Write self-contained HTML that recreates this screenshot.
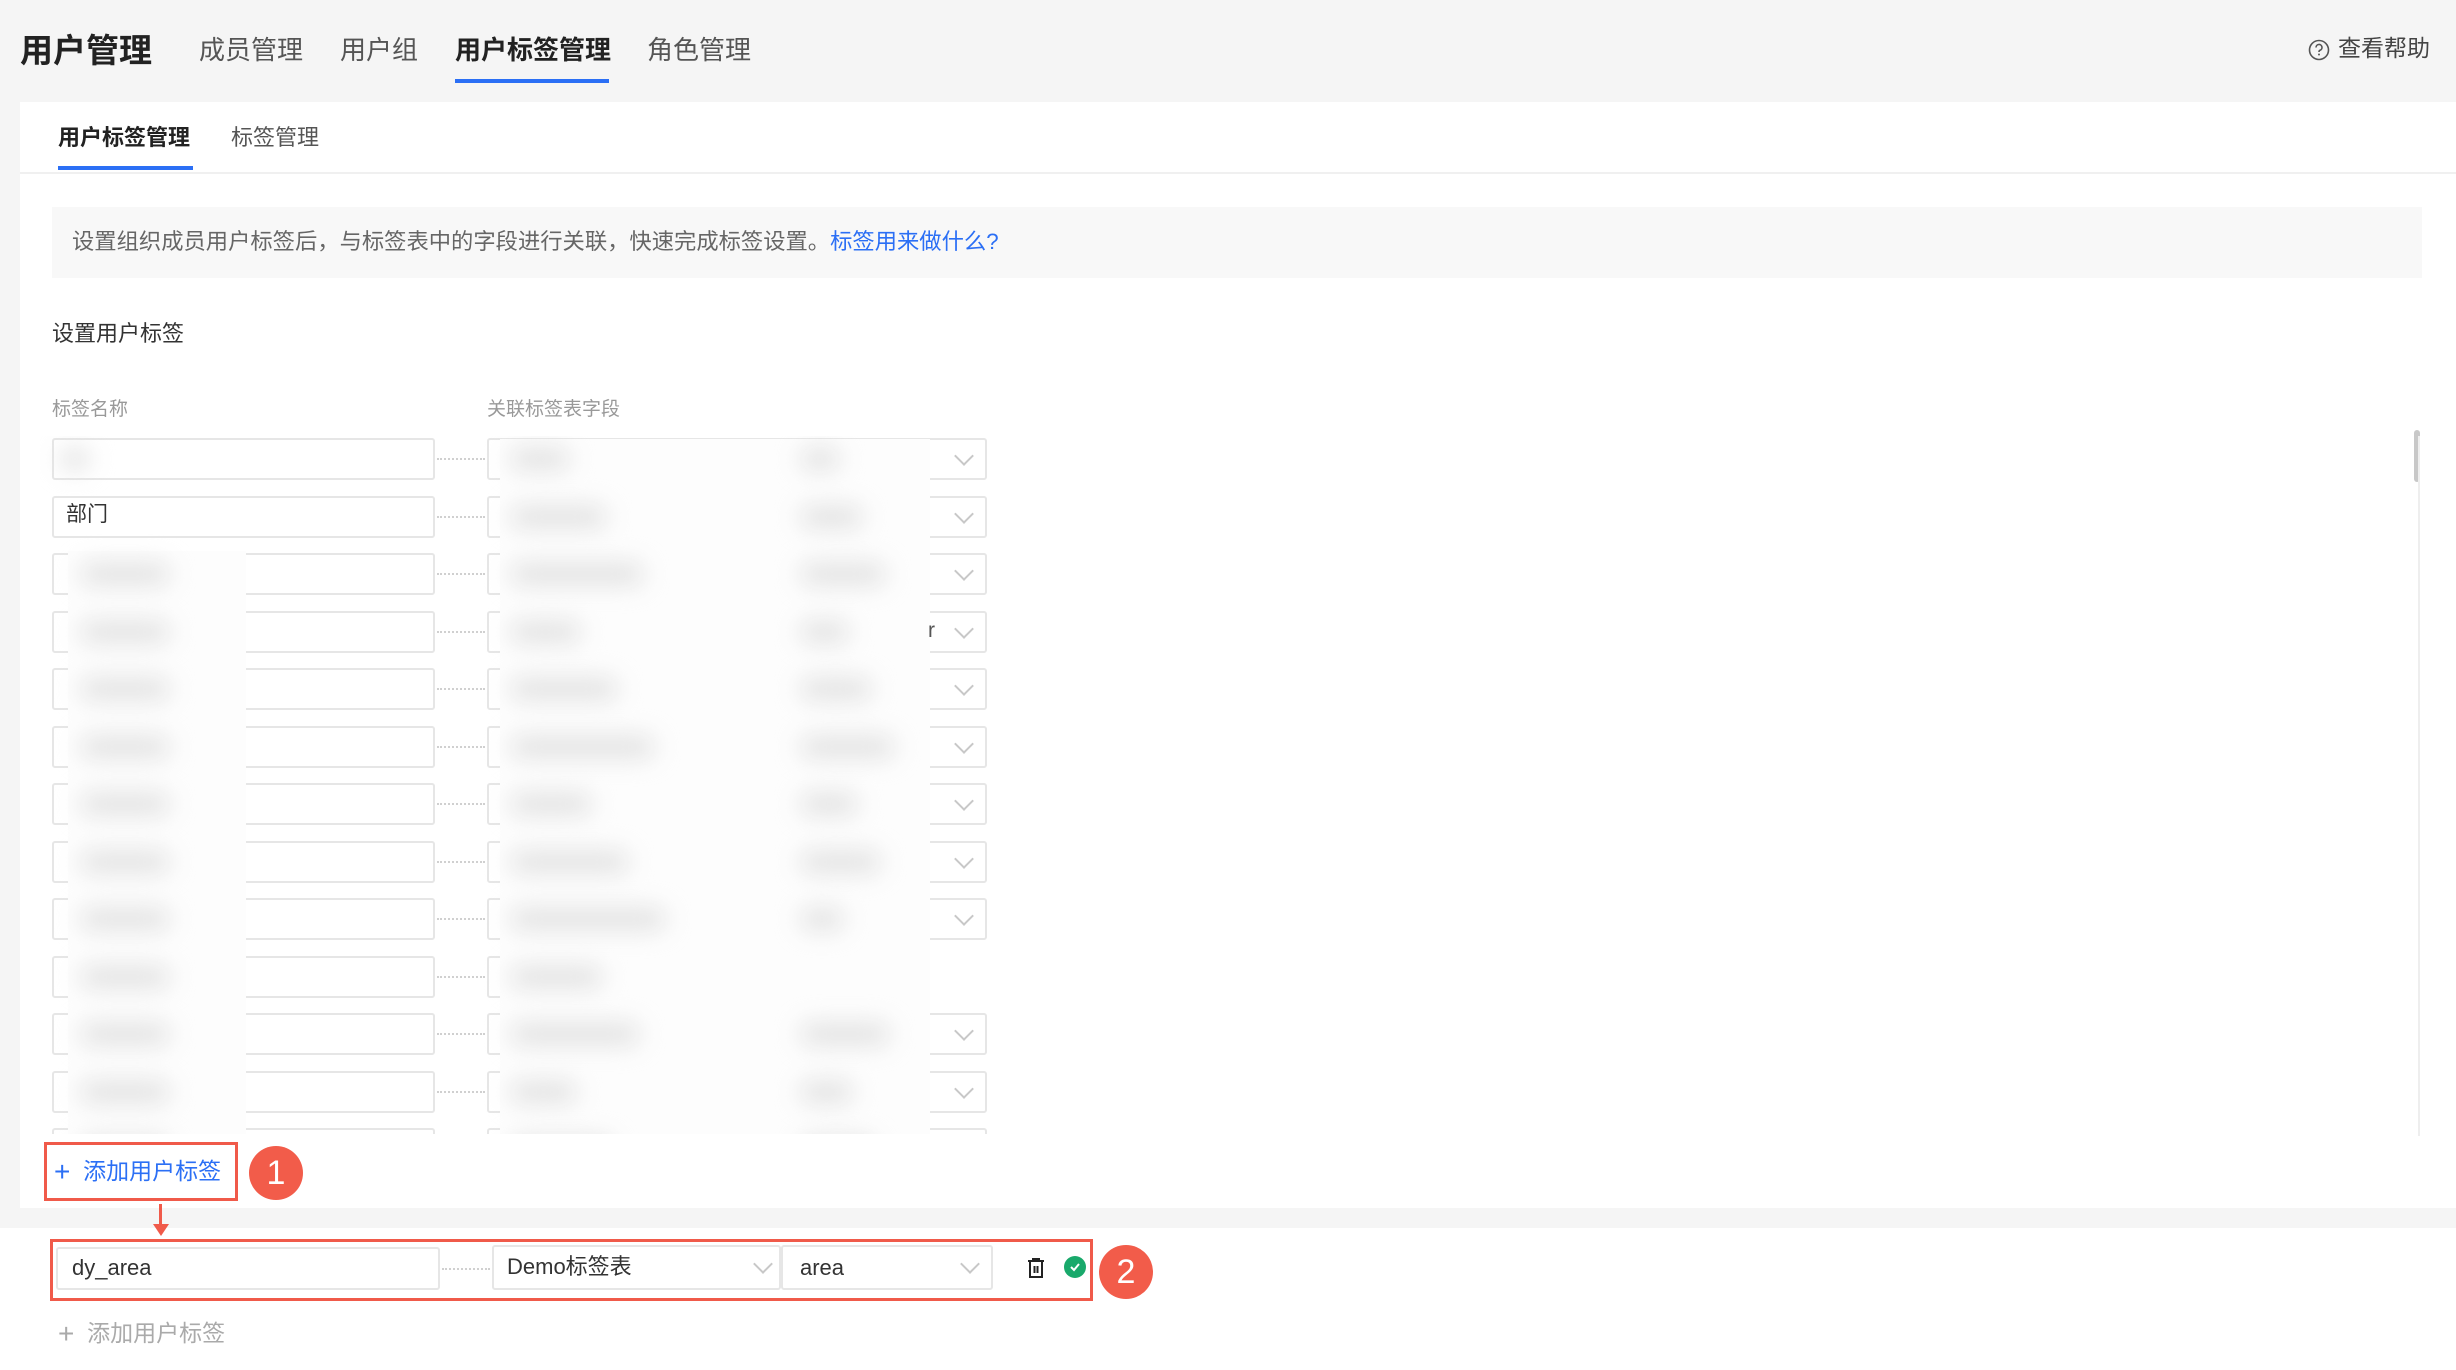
<!DOCTYPE html>
<html><head><meta charset="utf-8"><style>
*{margin:0;padding:0;box-sizing:border-box}
body{width:2456px;height:1370px;background:#fff;position:relative;overflow:hidden;font-family:"Liberation Sans","Noto Sans CJK SC",sans-serif;color:#333}
.a{position:absolute;white-space:nowrap;line-height:1.2}
.inp{position:absolute;border:2px solid #e6e6e6;border-radius:3px;background:#fff}
.chev{position:absolute;width:14px;height:14px;border-right:2px solid #c8c8c8;border-bottom:2px solid #c8c8c8;transform:rotate(45deg)}
.dot{position:absolute;border-top:2px dotted #d0d0d0;height:0}
.blob{position:absolute;background:#e2e2e2;border-radius:20px;filter:blur(12px)}
</style></head><body>
<div class="a" style="left:0;top:0;width:2456px;height:1228px;background:#f5f5f5"></div>
<div class="a" style="left:20px;top:31px;font-size:33px;font-weight:bold;color:#222">用户管理</div>
<div class="a" style="left:199px;top:35px;font-size:26px;color:#555">成员管理</div>
<div class="a" style="left:340px;top:35px;font-size:26px;color:#555">用户组</div>
<div class="a" style="left:455px;top:35px;font-size:26px;color:#222;font-weight:bold">用户标签管理</div>
<div class="a" style="left:455px;top:79px;width:154px;height:4px;background:#2b6ff5"></div>
<div class="a" style="left:647px;top:35px;font-size:26px;color:#555">角色管理</div>
<svg class="a" style="left:2308px;top:39px" width="22" height="22" viewBox="0 0 22 22"><circle cx="11" cy="11" r="9.5" fill="none" stroke="#555" stroke-width="1.6"/><path d="M8 8.5a3 3 0 1 1 4 2.8c-.8.3-1 .8-1 1.7" fill="none" stroke="#555" stroke-width="1.6"/><circle cx="11" cy="15.5" r="1" fill="#555"/></svg>
<div class="a" style="left:2338px;top:35px;font-size:23px;color:#444">查看帮助</div>

<div class="a" style="left:20px;top:102px;width:2436px;height:1106px;background:#fff"></div>
<div class="a" style="left:58px;top:125px;font-size:22px;font-weight:bold;color:#222">用户标签管理</div>
<div class="a" style="left:58px;top:166px;width:135px;height:4px;background:#2b6ff5"></div>
<div class="a" style="left:231px;top:125px;font-size:22px;color:#555">标签管理</div>
<div class="a" style="left:20px;top:172px;width:2436px;height:2px;background:#f0f0f0"></div>
<div class="a" style="left:52px;top:207px;width:2370px;height:71px;background:#f8f8f8"></div>
<div class="a" style="left:72px;top:229px;font-size:22.3px;color:#666">设置组织成员用户标签后，与标签表中的字段进行关联，快速完成标签设置。<span style="color:#2b6ff5">标签用来做什么?</span></div>
<div class="a" style="left:52px;top:321px;font-size:22px;color:#333">设置用户标签</div>
<div class="a" style="left:52px;top:399px;font-size:19px;color:#999">标签名称</div>
<div class="a" style="left:487px;top:399px;font-size:19px;color:#999">关联标签表字段</div>

<div class="a" style="left:40px;top:436px;width:980px;height:698px;overflow:hidden">
<div id="rows"></div>
</div>
<div class="a" style="left:2414px;top:430px;width:6px;height:52px;background:#c8c8c8;border-radius:3px"></div>
<div class="a" style="left:2418px;top:436px;width:2px;height:700px;background:#eee"></div>

<div class="a" style="left:44px;top:1142px;width:194px;height:59px;border:3px solid #f05a4a"></div>
<div class="a" style="left:54px;top:1153px;font-size:23px;color:#2b6ff5"><span style="font-size:28px;position:relative;top:2px">+</span>&nbsp; 添加用户标签</div>
<div class="a" style="left:249px;top:1146px;width:54px;height:54px;border-radius:50%;background:#f25c4a;color:#fff;font-size:34px;text-align:center;line-height:54px">1</div>
<div class="a" style="left:159px;top:1204px;width:3px;height:26px;background:#f05a4a"></div>
<div class="a" style="left:153px;top:1224px;width:0;height:0;border-left:8px solid transparent;border-right:8px solid transparent;border-top:12px solid #f05a4a"></div>

<div class="a" style="left:50px;top:1239px;width:1043px;height:62px;border:3px solid #f05a4a"></div>
<div class="inp" style="left:56px;top:1247px;width:384px;height:43px"></div>
<div class="a" style="left:72px;top:1255px;font-size:22px;color:#333">dy_area</div>
<div class="dot" style="left:442px;top:1268px;width:48px"></div>
<div class="inp" style="left:492px;top:1245px;width:289px;height:45px"></div>
<div class="inp" style="left:781px;top:1245px;width:212px;height:45px"></div>
<div class="a" style="left:507px;top:1254px;font-size:22px;color:#333">Demo标签表</div>
<div class="a" style="left:800px;top:1255px;font-size:22px;color:#333">area</div>
<div class="chev" style="left:756px;top:1257px"></div>
<div class="chev" style="left:963px;top:1257px"></div>
<svg class="a" style="left:1026px;top:1257px" width="20" height="22" viewBox="0 0 20 22"><path d="M2 4h16M7 4V2h6v2M4 4v16h12V4M8.5 9v7M11.5 9v7" fill="none" stroke="#222" stroke-width="2"/></svg>
<div class="a" style="left:1064px;top:1256px;width:22px;height:22px;border-radius:50%;background:#19a96b"></div>
<svg class="a" style="left:1064px;top:1256px" width="22" height="22"><path d="M7 11l3 3 5-6" fill="none" stroke="#fff" stroke-width="2"/></svg>
<div class="a" style="left:1099px;top:1245px;width:54px;height:54px;border-radius:50%;background:#f25c4a;color:#fff;font-size:34px;text-align:center;line-height:54px">2</div>
<div class="a" style="left:58px;top:1315px;font-size:23px;color:#aaa"><span style="font-size:28px;position:relative;top:2px">+</span>&nbsp; 添加用户标签</div>

<script>
var h='';
for(var i=0;i<13;i++){var t=2+i*57.5;
h+='<div class="inp" style="left:12px;top:'+t+'px;width:383px;height:42px"></div>';
h+='<div class="dot" style="left:397px;top:'+(t+20)+'px;width:48px"></div>';
h+='<div class="inp" style="left:447px;top:'+t+'px;width:'+(i==9?200:500)+'px;height:42px"></div>';
if(i!=9){h+='<div style="position:absolute;left:740px;top:'+t+'px;width:2px;height:42px;background:#e6e6e6"></div>';
h+='<div class="chev" style="left:917px;top:'+(t+11)+'px"></div>';}
}
h+='<div style="position:absolute;left:460px;top:3px;width:430px;height:700px;background:#fdfdfd"></div>';
h+='<div style="position:absolute;left:28px;top:115px;width:178px;height:600px;background:#fdfdfd"></div>';
for(var i=0;i<13;i++){var t=2+i*57.5;
if(i!=1){h+='<div class="blob" style="left:'+(i==0?20:40)+'px;top:'+(t+10)+'px;width:'+(i==0?30:90)+'px;height:22px"></div>';}
h+='<div class="blob" style="left:470px;top:'+(t+10)+'px;width:'+(60+(i*37)%100)+'px;height:22px"></div>';
if(i!=9)h+='<div class="blob" style="left:760px;top:'+(t+10)+'px;width:'+(40+(i*23)%60)+'px;height:22px"></div>';}
h='<div style="position:relative">'+h+'</div>';
h+='<div style="position:absolute;left:26px;top:66px;font-size:21px;line-height:1.2;color:#333">部门</div>';
h+='<div style="position:absolute;left:888px;top:182px;font-size:21px;line-height:1.2;color:#555">r</div>';
document.getElementById('rows').innerHTML=h;
</script>
</body></html>
